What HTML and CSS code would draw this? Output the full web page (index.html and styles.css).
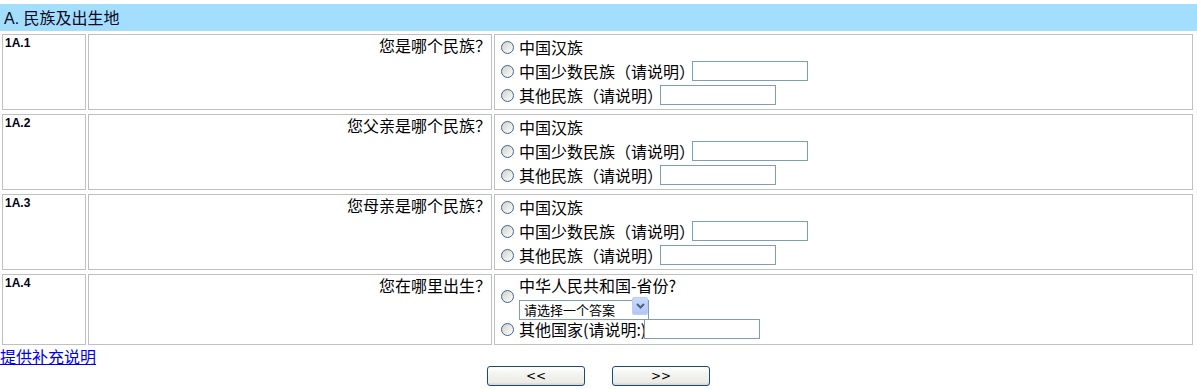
FILE: index.html
```html
<!DOCTYPE html>
<html lang="zh-CN">
<head>
<meta charset="utf-8">
<title>民族及出生地</title>
<link rel="stylesheet" href="styles.css">
</head>
<body>
<div class="page">
  <div class="section-title"><span class="latin">A. </span>民族及出生地</div>

  <table class="q">
    <tr>
      <td class="qid">1A.1</td>
      <td class="qtext">您是哪个民族？</td>
      <td class="qopts">
        <div class="opt"><input type="radio" name="q1"><span>中国汉族</span></div>
        <div class="opt"><input type="radio" name="q1"><span>中国少数民族（请说明）</span><input type="text" class="txt"></div>
        <div class="opt"><input type="radio" name="q1"><span>其他民族（请说明）</span><input type="text" class="txt"></div>
      </td>
    </tr>
  </table>

  <table class="q">
    <tr>
      <td class="qid">1A.2</td>
      <td class="qtext">您父亲是哪个民族？</td>
      <td class="qopts">
        <div class="opt"><input type="radio" name="q2"><span>中国汉族</span></div>
        <div class="opt"><input type="radio" name="q2"><span>中国少数民族（请说明）</span><input type="text" class="txt"></div>
        <div class="opt"><input type="radio" name="q2"><span>其他民族（请说明）</span><input type="text" class="txt"></div>
      </td>
    </tr>
  </table>

  <table class="q">
    <tr>
      <td class="qid">1A.3</td>
      <td class="qtext">您母亲是哪个民族？</td>
      <td class="qopts">
        <div class="opt"><input type="radio" name="q3"><span>中国汉族</span></div>
        <div class="opt"><input type="radio" name="q3"><span>中国少数民族（请说明）</span><input type="text" class="txt"></div>
        <div class="opt"><input type="radio" name="q3"><span>其他民族（请说明）</span><input type="text" class="txt"></div>
      </td>
    </tr>
  </table>

  <table class="q">
    <tr>
      <td class="qid">1A.4</td>
      <td class="qtext">您在哪里出生？</td>
      <td class="qopts last">
        <div class="opt-multi">
          <input type="radio" name="q4">
          <div class="stack">
            <div class="line">中华人民共和国-省份?</div>
            <div class="sel-wrap">
              <select class="sel"><option>请选择一个答案</option></select>
              <span class="sel-btn"><svg width="9" height="6" viewBox="0 0 9 6"><path d="M1 1 L4.5 4.5 L8 1" fill="none" stroke="#4d6185" stroke-width="2"/></svg></span>
            </div>
          </div>
        </div>
        <div class="opt"><input type="radio" name="q4"><span>其他国家(请说明:)</span><input type="text" class="txt tight"></div>
      </td>
    </tr>
  </table>

  <a class="more" href="#">提供补充说明</a>

  <div class="nav">
    <button type="button" class="btn">&lt;&lt;</button>
    <button type="button" class="btn">&gt;&gt;</button>
  </div>
</div>
</body>
</html>
```

FILE: styles.css
```css
html, body {
  margin: 0;
  padding: 0;
  background: #ffffff;
}

body {
  font-family: "Noto Sans CJK SC", "Noto Sans", sans-serif;
  font-size: 16px;
  color: #000;
}

.page {
  padding-top: 4px;
}

.section-title {
  height: 27px;
  line-height: 27px;
  background: #a4deff;
  padding-left: 4px;
  margin-bottom: 1px;
  font-size: 16px;
  color: #0a0a20;
}

.section-title .latin {
  font-family: "Liberation Sans", sans-serif;
}

.q {
  width: 1195px;
  border-collapse: separate;
  border-spacing: 2px;
  table-layout: fixed;
}

.q td {
  border: 1px solid #c0c0c0;
  vertical-align: top;
  padding: 0;
  box-sizing: border-box;
}

.q td.qid {
  width: 84px;
  font-family: "Liberation Sans", Arial, sans-serif;
  font-weight: bold;
  font-size: 12px;
  line-height: 14px;
  padding: 1px 0 0 2px;
  color: #000018;
}

.q td.qtext {
  width: 404px;
  text-align: right;
  line-height: 20px;
  padding: 0;
}

.q td.qopts {
  padding: 0 0 2px 0;
}

.q td.qopts.last {
  padding: 0 0 3px 0;
}

.opt {
  display: flex;
  align-items: center;
  height: 24px;
  white-space: nowrap;
}

.opt-multi {
  display: flex;
  align-items: center;
  height: 42px;
  white-space: nowrap;
}

.stack {
  display: flex;
  flex-direction: column;
}

.line {
  line-height: 20px;
}

input[type="radio"] {
  appearance: none;
  -webkit-appearance: none;
  width: 13px;
  height: 13px;
  margin: 0 5px 0 6px;
  border: 1px solid #3d6590;
  border-radius: 50%;
  background: linear-gradient(135deg, #d0d0ca 0%, #e8e8e4 50%, #ffffff 100%);
  box-sizing: border-box;
  flex: none;
}

.txt {
  width: 116px;
  height: 20px;
  box-sizing: border-box;
  border: 1px solid #7f9db9;
  padding: 0 2px;
  margin: 0 0 0 -3px;
  background: #fff;
  font-size: 13px;
  flex: none;
}

.txt.tight {
  margin-left: -2px;
}

.sel-wrap {
  position: relative;
  width: 130px;
  height: 20px;
  margin: 1px 0;
}

.sel {
  appearance: none;
  -webkit-appearance: none;
  width: 130px;
  height: 20px;
  box-sizing: border-box;
  border: 1px solid #7f9db9;
  border-radius: 0;
  padding: 0 0 0 4px;
  margin: 0;
  background: #fff;
  font-family: "Noto Sans CJK SC", sans-serif;
  font-size: 13px;
  line-height: 18px;
  color: #000;
}

.sel-btn {
  position: absolute;
  right: 1px;
  top: 1px;
  width: 16px;
  height: 18px;
  box-sizing: border-box;
  border: 1px solid #b9cdf6;
  border-radius: 2px;
  background: linear-gradient(#cad9fd, #b3c7f3);
  display: flex;
  align-items: center;
  justify-content: center;
}

.more {
  display: block;
  width: fit-content;
  line-height: 19px;
  color: #0000ee;
  text-decoration: underline;
  font-size: 16px;
}

.nav {
  display: flex;
  justify-content: center;
  gap: 27px;
}

.btn {
  width: 98px;
  height: 20px;
  box-sizing: border-box;
  border: 1px solid #1a4a7c;
  border-radius: 3px;
  background: linear-gradient(#ffffff 0%, #f3f3ef 40%, #ecebe6 85%, #d8d3c8 100%);
  font-family: "DejaVu Sans", sans-serif;
  font-size: 12px;
  line-height: 16px;
  color: #000;
  padding: 0;
  margin: 0;
}
```
